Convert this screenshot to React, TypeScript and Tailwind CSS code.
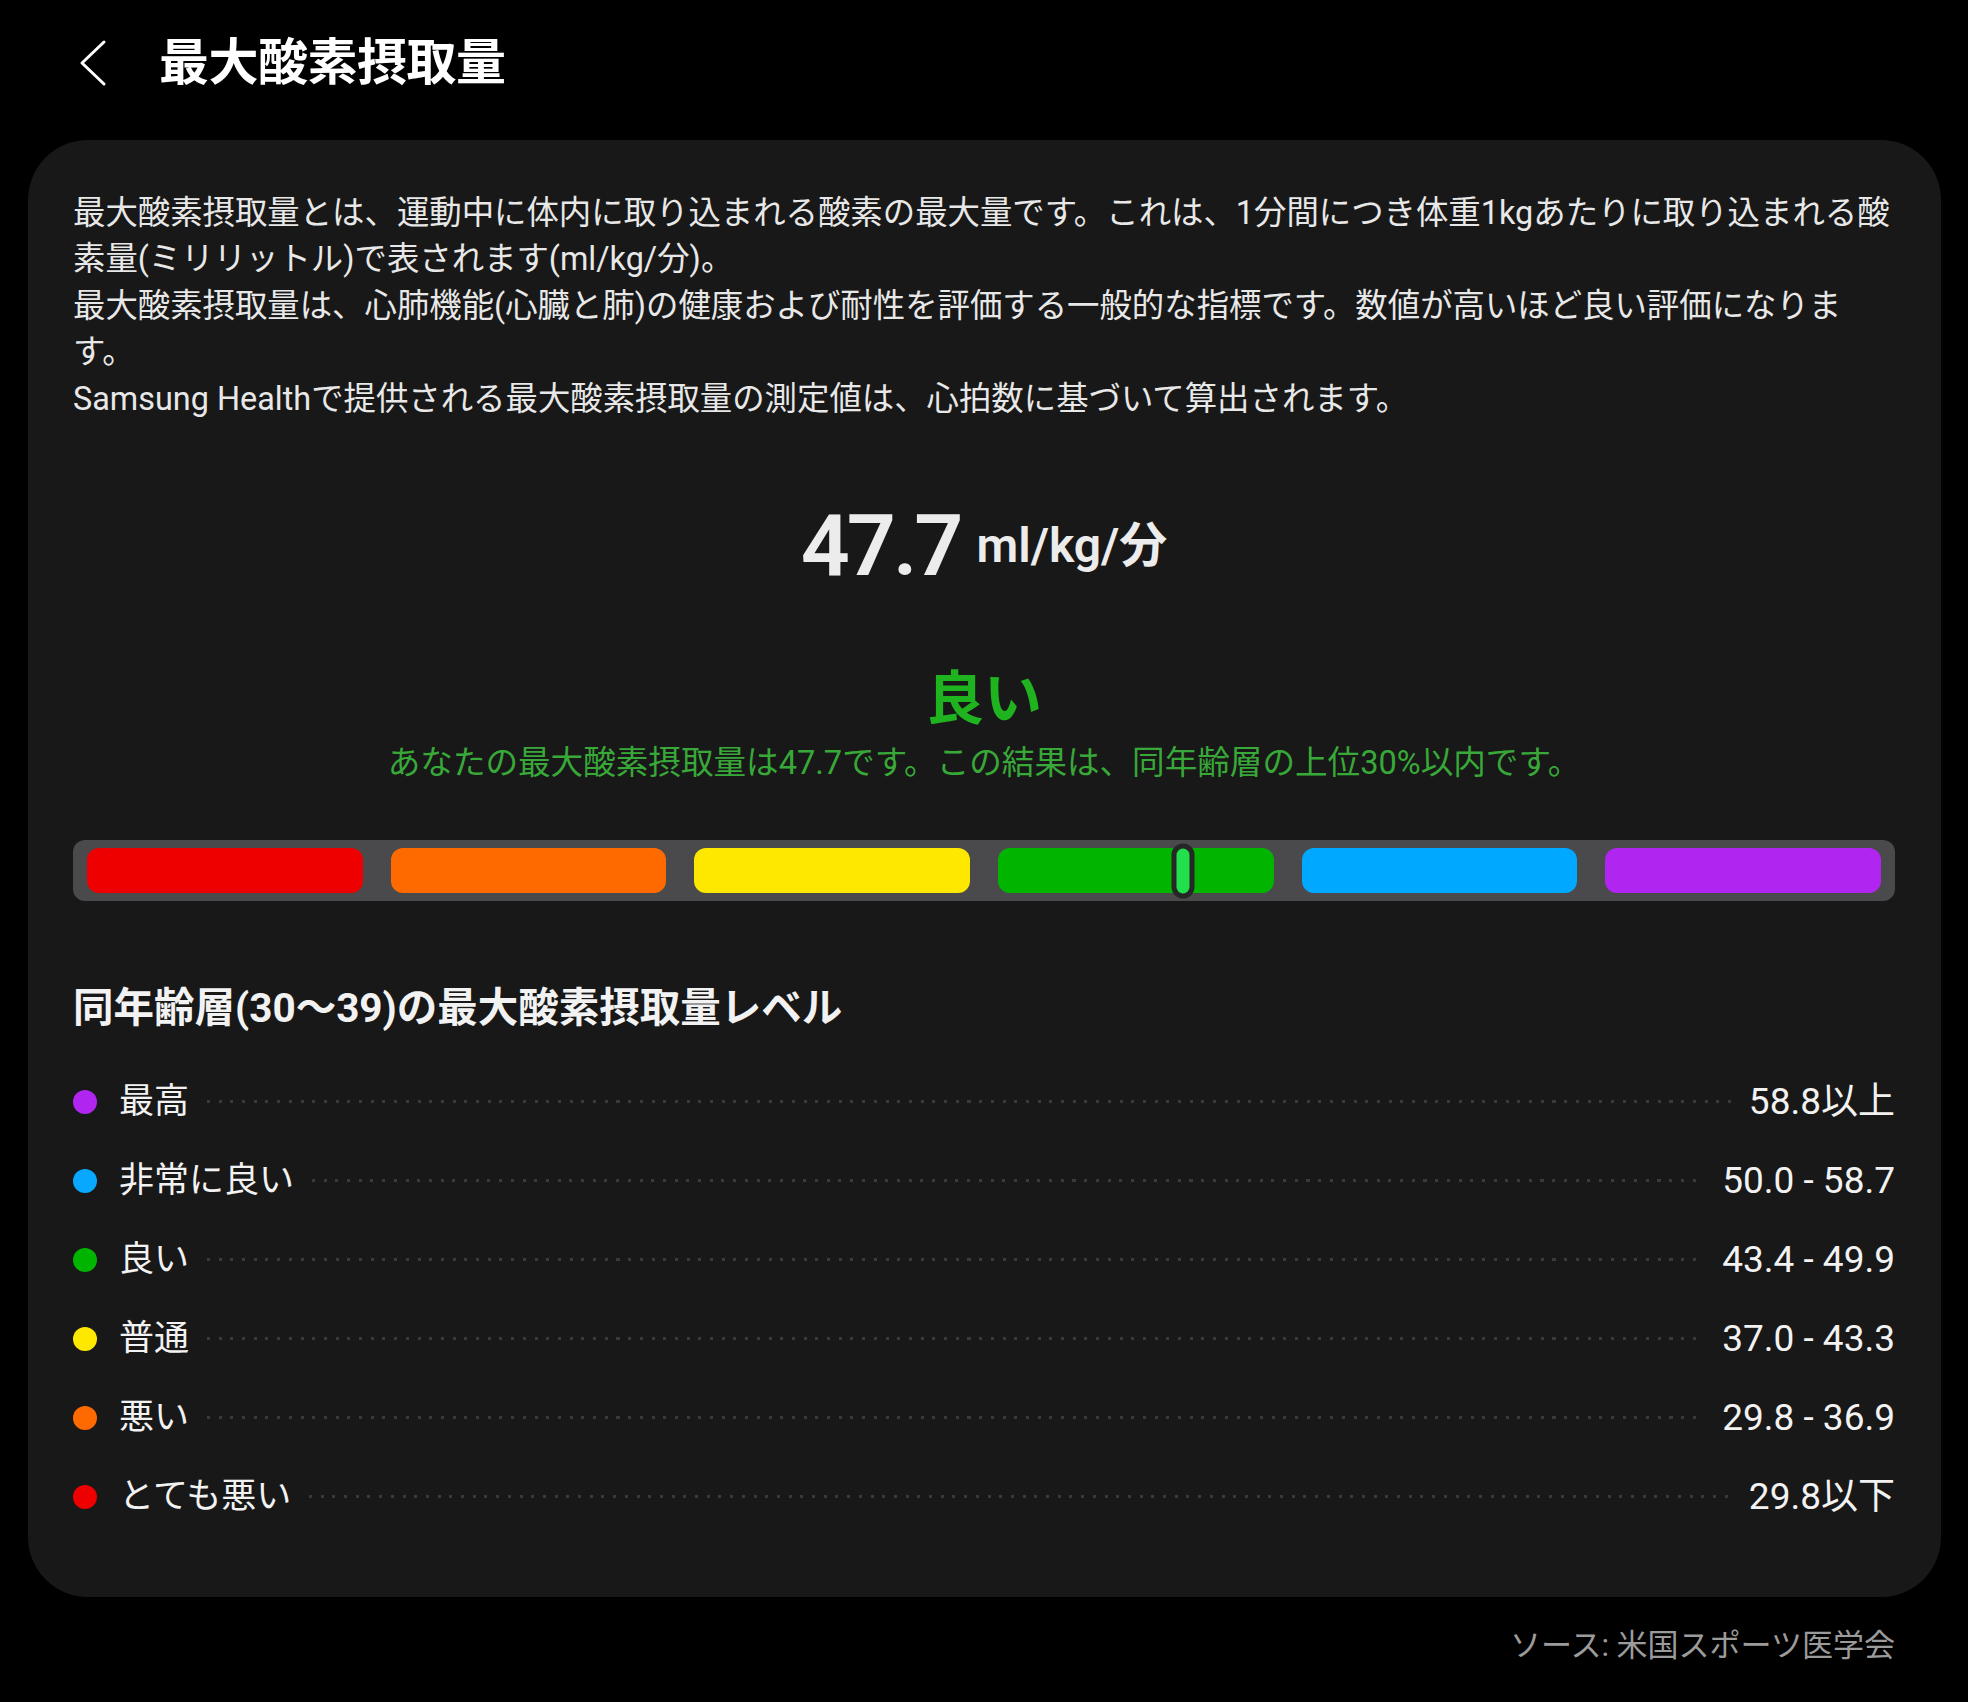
import React from "react";

type Level = { label: string; range: string; color: string };

const levels: Level[] = [
  { label: "最高", range: "58.8以上", color: "bg-[#b026f0]" },
  { label: "非常に良い", range: "50.0 - 58.7", color: "bg-[#08a8ff]" },
  { label: "良い", range: "43.4 - 49.9", color: "bg-[#00b400]" },
  { label: "普通", range: "37.0 - 43.3", color: "bg-[#ffe800]" },
  { label: "悪い", range: "29.8 - 36.9", color: "bg-[#ff6a00]" },
  { label: "とても悪い", range: "29.8以下", color: "bg-[#ee0000]" },
];

const segments = [
  "bg-[#ee0000]",
  "bg-[#ff6a00]",
  "bg-[#ffe800]",
  "bg-[#00b400]",
  "bg-[#00a8ff]",
  "bg-[#b026f0]",
];

const intro = [
  "最大酸素摂取量とは、運動中に体内に取り込まれる酸素の最大量です。これは、1分間につき体重1kgあたりに取り込まれる酸",
  "素量(ミリリットル)で表されます(ml/kg/分)。",
  "最大酸素摂取量は、心肺機能(心臓と肺)の健康および耐性を評価する一般的な指標です。数値が高いほど良い評価になりま",
  "す。",
  "Samsung Healthで提供される最大酸素摂取量の測定値は、心拍数に基づいて算出されます。",
];

function BackIcon() {
  return (
    <svg width="30" height="48" viewBox="0 0 30 48" fill="none">
      <polyline
        points="26,3 4,24 26,45"
        stroke="#ffffff"
        strokeWidth="3"
        strokeLinecap="round"
        strokeLinejoin="round"
      />
    </svg>
  );
}

function ScaleBar() {
  return (
    <div className="mt-[57px] flex h-[61px] gap-[28px] rounded-[12px] bg-[#4a4a4c] px-[14px] py-[8px]">
      {segments.map((c, i) => (
        <div key={i} className={`relative flex-1 rounded-[12px] ${c}`}>
          {i === 3 && (
            <div className="absolute left-[67%] top-1/2 flex h-[55px] w-[23px] -translate-x-1/2 -translate-y-1/2 items-center justify-center rounded-full bg-[#262626]">
              <div className="h-[45px] w-[13px] rounded-full bg-[#22e04c]" />
            </div>
          )}
        </div>
      ))}
    </div>
  );
}

function LevelRow({ level }: { level: Level }) {
  return (
    <div className="flex h-[79px] items-center">
      <span className={`h-[24px] w-[24px] shrink-0 rounded-full ${level.color}`} />
      <span className="ml-[22px] text-[35px] leading-none text-[#f2f2f2]">{level.label}</span>
      <span className="mx-[18px] h-[3px] flex-1 bg-[image:repeating-linear-gradient(to_right,#3a3a3a_0_3px,transparent_3px_11.7px)]" />
      <span className="text-[37px] leading-none text-[#f2f2f2]">{level.range}</span>
    </div>
  );
}

export default function App() {
  return (
    <div className="min-h-[1702px] w-full bg-black pb-[20px] font-['Roboto','Noto_Sans_CJK_JP',sans-serif] text-white">
      <header className="flex h-[126px] items-center pl-[78px]">
        <BackIcon />
        <h1 className="ml-[51px] text-[50px] font-bold leading-none tracking-[-0.5px] text-white">
          最大酸素摂取量
        </h1>
      </header>

      <main className="ml-[28px] mr-[27px] mt-[14px] rounded-[60px] bg-[#181818] pb-[61px] pl-[45px] pr-[46px] pt-[50px]">
        <div className="text-[32.4px] leading-[46.4px] text-[#e8e8e8]">
          {intro.map((line, i) => (
            <p key={i} className="whitespace-nowrap">
              {line}
            </p>
          ))}
        </div>

        <div className="mt-[71px] flex h-[106px] items-center justify-center gap-[16px] text-[#ececec]">
          <span className="text-[86px] font-semibold leading-none tracking-[-3px]">47.7</span>
          <span className="text-[48px] font-semibold leading-none">ml/kg/分</span>
        </div>

        <div className="mt-[65px] text-center text-[58px] font-bold leading-[70px] text-[#1fb41f]">
          良い
        </div>
        <div className="mt-[9px] text-center text-[32.6px] leading-[40px] text-[#38a838]">
          あなたの最大酸素摂取量は47.7です。この結果は、同年齢層の上位30%以内です。
        </div>

        <ScaleBar />

        <h2 className="mt-[83px] text-[40.5px] font-bold leading-[48px] text-[#f2f2f2]">
          同年齢層(30〜39)の最大酸素摂取量レベル
        </h2>

        <div className="mt-[30px]">
          {levels.map((l) => (
            <LevelRow key={l.label} level={l} />
          ))}
        </div>
      </main>

      <p className="mt-[29px] pr-[73px] text-right text-[31px] leading-[40px] text-[#9b9b9b]">
        ソース: 米国スポーツ医学会
      </p>
    </div>
  );
}
